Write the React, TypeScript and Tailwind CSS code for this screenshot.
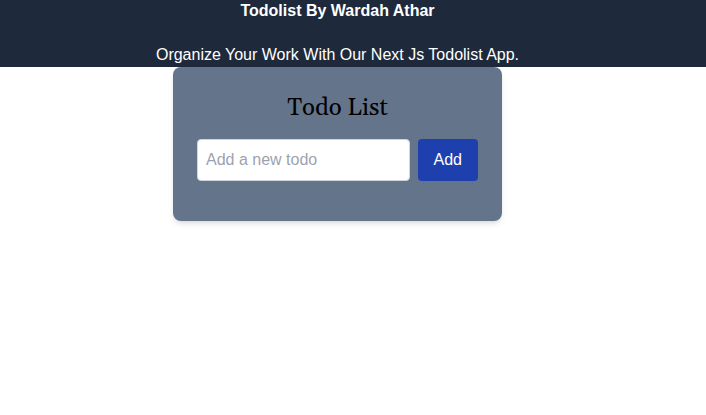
import { useState } from "react";

export default function App() {
  const [todo, setTodo] = useState("");

  return (
    <div className="bg-white pb-8 font-['Liberation_Sans',Arial,sans-serif] text-base text-black">
      <header className="bg-[#1e293b] pr-8 pb-px pl-px text-center text-white">
        <h1 className="mb-[22px] font-bold leading-[22px]">Todolist By Wardah Athar</h1>
        <p className="leading-[22px]">Organize Your Work With Our Next Js Todolist App.</p>
      </header>
      <div className="pr-8 pl-px">
        <main className="mx-auto max-w-[329px] rounded-lg bg-[#64748b] p-6 pb-10 [box-shadow:0_4px_6px_-1px_rgb(0_0_0/0.1),0_2px_4px_-2px_rgb(0_0_0/0.1)]">
          <h2 className="mb-3.5 text-center font-['Georgia','Gelasio','DejaVu_Serif',serif] text-2xl leading-[34px]">
            Todo List
          </h2>
          <form className="flex gap-2" onSubmit={(e) => e.preventDefault()}>
            <input
              type="text"
              aria-label="Add a new todo"
              placeholder="Add a new todo"
              value={todo}
              onChange={(e) => setTodo(e.target.value)}
              className="min-w-0 flex-1 rounded border border-[#d1d5db] bg-white p-2 placeholder:text-[#9ca3af]"
            />
            <button type="submit" className="rounded bg-[#1e40af] px-4 py-2 text-white">
              Add
            </button>
          </form>
        </main>
      </div>
    </div>
  );
}
